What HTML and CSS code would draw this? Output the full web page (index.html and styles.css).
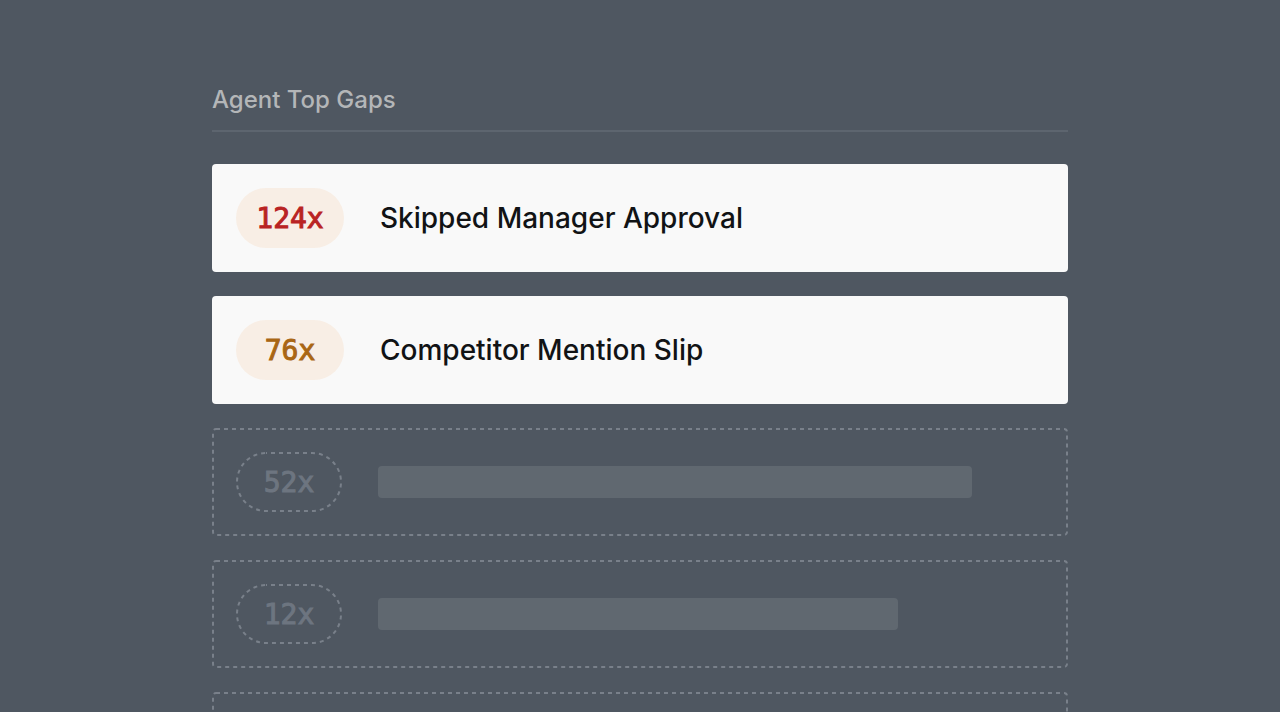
FILE: index.html
```html
<!DOCTYPE html>
<html lang="en">
<head>
  <meta charset="UTF-8">
  <meta name="viewport" content="width=device-width, initial-scale=1">
  <title>Agent Top Gaps</title>
  <link rel="stylesheet" href="styles.css">
</head>
<body>
  <main class="container">
    <h1 class="heading">Agent Top Gaps</h1>

    <ul class="gaps">
      <li class="gap">
        <span class="count count-red">124x</span>
        <span class="name">Skipped Manager Approval</span>
      </li>
      <li class="gap">
        <span class="count count-amber">76x</span>
        <span class="name">Competitor Mention Slip</span>
      </li>
      <li class="gap gap-empty">
        <svg class="outline" aria-hidden="true"><rect x="1" y="1" rx="3"/></svg>
        <span class="count">
          <svg class="outline" aria-hidden="true"><rect x="1" y="1" rx="29" stroke-dashoffset="3"/></svg>
          52x
        </span>
        <span class="bar" style="width: 594px"></span>
      </li>
      <li class="gap gap-empty">
        <svg class="outline" aria-hidden="true"><rect x="1" y="1" rx="3"/></svg>
        <span class="count">
          <svg class="outline" aria-hidden="true"><rect x="1" y="1" rx="29" stroke-dashoffset="3"/></svg>
          12x
        </span>
        <span class="bar" style="width: 520px"></span>
      </li>
      <li class="gap gap-empty">
        <svg class="outline" aria-hidden="true"><rect x="1" y="1" rx="3"/></svg>
      </li>
    </ul>
  </main>
</body>
</html>
```

FILE: styles.css
```css
* {
  box-sizing: border-box;
}

body {
  font-family: Inter, sans-serif;
  margin: 0;
  height: 100vh;
  overflow: hidden;
  background-color: #4f5761;
}

.container {
  max-width: 904px;
  margin: 0 auto;
  padding: 84px 24px 0;
}

.heading {
  margin: 0 0 32px;
  padding-bottom: 14px;
  border-bottom: 2px solid #5d656f;
  color: #b4b6b8;
  font-size: 24px;
  font-weight: 500;
  line-height: 32px;
}

.gaps {
  display: flex;
  flex-direction: column;
  gap: 24px;
  margin: 0;
  padding: 0;
  list-style-type: none;
}

.gap {
  display: flex;
  align-items: center;
  gap: 36px;
  min-height: 108px;
  padding: 24px;
  border-radius: 4px;
  background-color: #f9f9f9;
}

.count {
  display: flex;
  flex-shrink: 0;
  align-items: center;
  justify-content: center;
  width: 108px;
  height: 60px;
  border-radius: 30px;
  background-color: #f8eee5;
  font-family: "DejaVu Sans Mono", monospace;
  font-size: 28px;
  -webkit-text-stroke: 1px currentColor;
}

.count-red {
  color: #b92323;
}

.count-amber {
  color: #a96614;
}

.name {
  color: #111315;
  font-size: 28px;
  font-weight: 500;
}

/* placeholder rows */
.gap-empty {
  position: relative;
  background-color: transparent;
}

.gap-empty .count {
  position: relative;
  width: 106px;
  background-color: transparent;
  color: #6d7580;
}

/* dashed frame drawn over the box edge */
.outline {
  position: absolute;
  top: 0;
  left: 0;
  width: 100%;
  height: 100%;
}

.outline rect {
  width: calc(100% - 2px);
  height: calc(100% - 2px);
  fill: none;
  stroke: #79808a;
  stroke-width: 2px;
  stroke-dasharray: 4 4;
}

.bar {
  height: 32px;
  border-radius: 4px;
  background-color: #606870;
}
```
